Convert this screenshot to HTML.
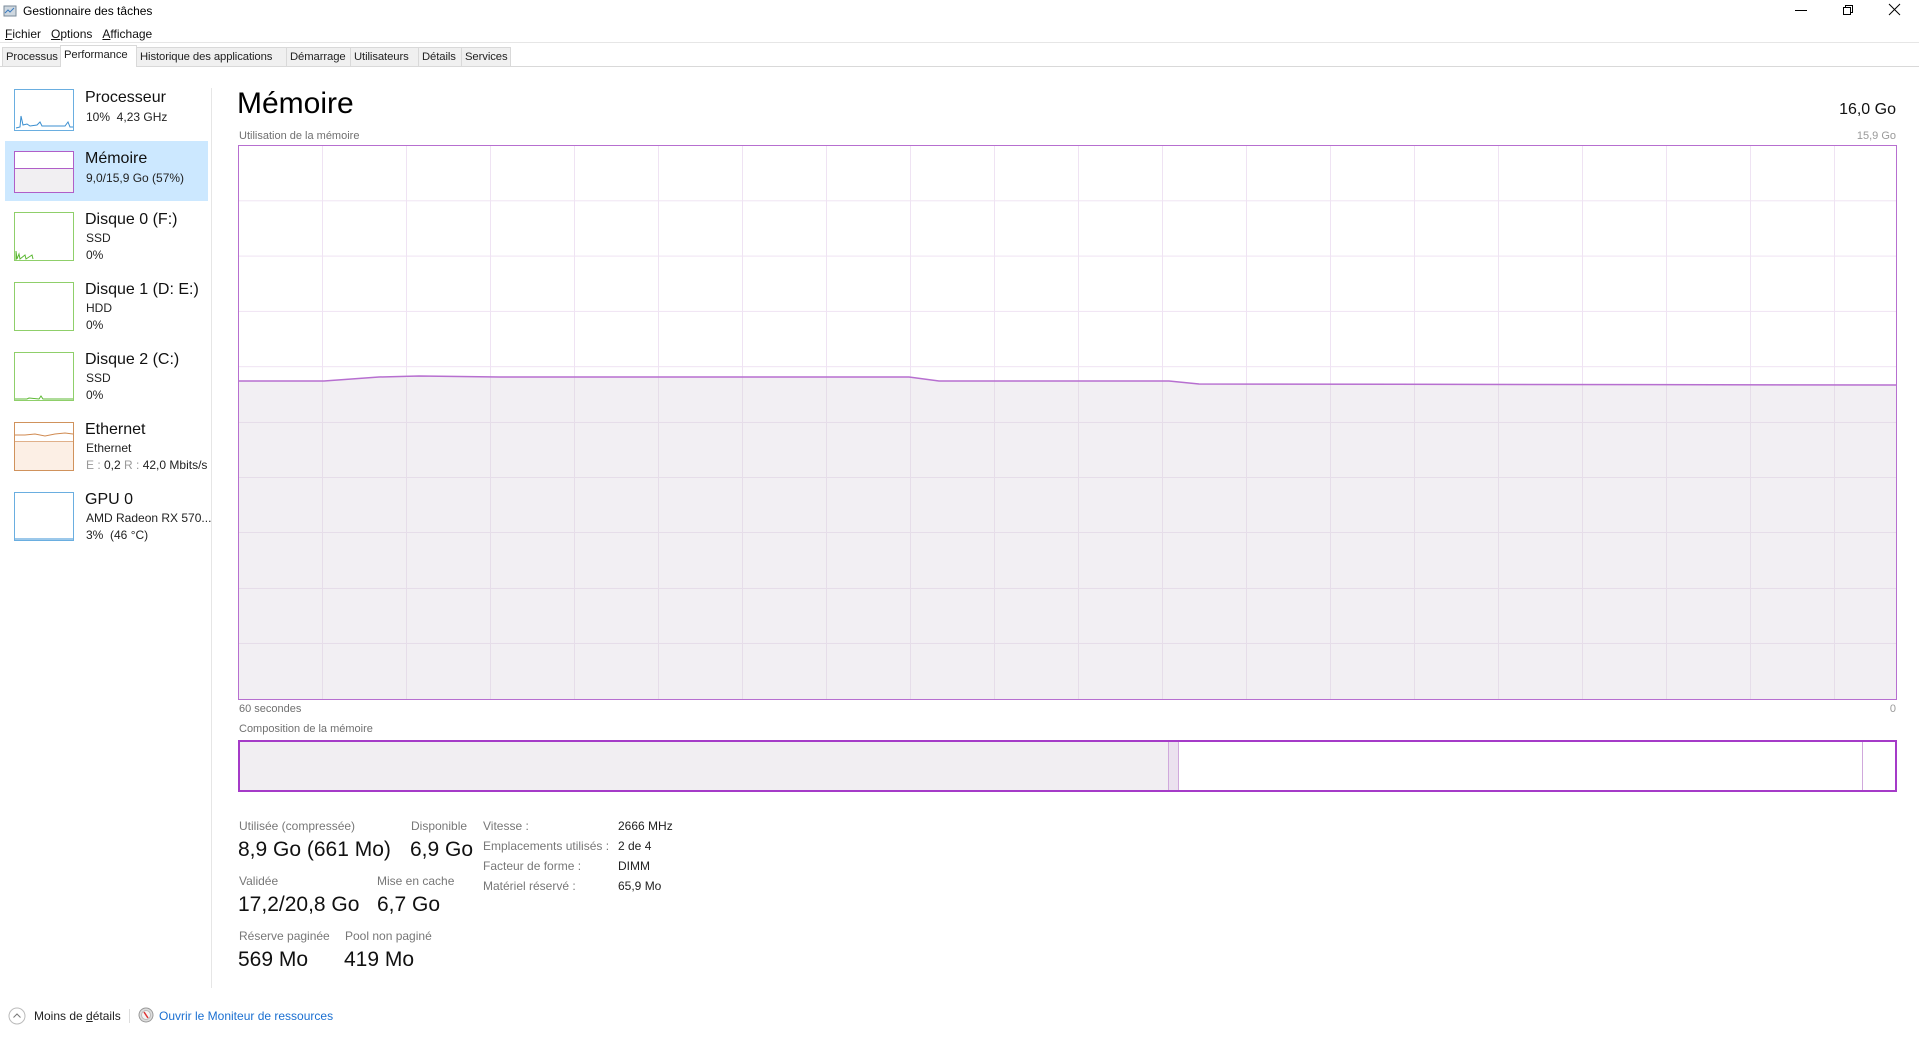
<!DOCTYPE html>
<html><head><meta charset="utf-8"><style>
*{margin:0;padding:0;box-sizing:border-box}
body{width:1919px;height:1040px;background:#fff;font-family:"Liberation Sans",sans-serif;color:#000;position:relative;overflow:hidden}
.a{position:absolute;white-space:nowrap}
.tab{position:absolute;top:47px;height:20px;background:#f0f0f0;border:1px solid #d9d9d9;font-size:11.3px;line-height:18px;padding-left:3px;color:#222;letter-spacing:-0.1px}
.th{position:absolute;left:14px;width:60px;height:49px;border:1px solid}
.t1{font-size:16px;color:#111}
.t2{font-size:12px;color:#222}
.g{color:#707070;font-size:11px}
.lab{font-size:12px;color:#777}
.val{font-size:21px;color:#111}
</style></head><body>
<svg class="a" style="left:3px;top:5px" width="14" height="12"><rect x="1" y="1" width="12" height="10" fill="#cfd8e0" stroke="#7a8a99"/><path d="M2 8 L5 5 L7 7 L11 3" stroke="#3b7bbf" fill="none"/></svg>
<div class="a" style="left:23px;top:4px;font-size:12px">Gestionnaire des tâches</div>
<div class="a" style="left:1795px;top:10px;width:12px;height:1px;background:#000"></div>
<svg class="a" style="left:1842px;top:4px" width="12" height="12"><rect x="1.5" y="3.5" width="7" height="7" fill="none" stroke="#000"/><path d="M3.5 3.5V1.5H10.5V8.5H8.5" fill="none" stroke="#000"/></svg>
<svg class="a" style="left:1888px;top:3px" width="13" height="13"><path d="M1 1L12 12M12 1L1 12" stroke="#000"/></svg>
<div class="a" style="left:5px;top:27px;font-size:12px;color:#111"><u>F</u>ichier&nbsp;&nbsp;&nbsp;<u>O</u>ptions&nbsp;&nbsp;&nbsp;<u>A</u>ffichage</div>
<div class="a" style="left:0;top:42px;width:1919px;height:1px;background:#e6e6e6"></div>
<div class="a" style="left:0;top:66px;width:1919px;height:1px;background:#d9d9d9"></div>
<div class="tab" style="left:2px;width:59px">Processus</div>
<div class="tab" style="left:60px;top:45px;height:22px;width:77px;background:#fff;border-bottom:none">Performance</div>
<div class="tab" style="left:136px;width:151px">Historique des applications</div>
<div class="tab" style="left:286px;width:65px">Démarrage</div>
<div class="tab" style="left:350px;width:69px">Utilisateurs</div>
<div class="tab" style="left:418px;width:44px">Détails</div>
<div class="tab" style="left:461px;width:50px">Services</div>
<div class="a" style="left:211px;top:88px;width:1px;height:900px;background:#e6e6e6"></div>
<div class="a" style="left:5px;top:141px;width:203px;height:60px;background:#cce8ff"></div>

<div class="th" style="top:89px;height:42px;border-color:#6aaee0;background:#fff"><svg width="58" height="40" style="display:block"><path d="M1 38 L5 37 L6 26 L8 35 L12 34 L15 36 L22 35 L25 32 L27 36 L40 36 L50 36 L53 32 L55 37 L58 37" stroke="#3b8fd0" fill="none"/></svg></div>
<div class="a t1" style="left:85px;top:89px">Processeur</div>
<div class="a t2" style="left:86px;top:110px">10%&nbsp; 4,23 GHz</div>

<div class="th" style="top:151px;height:42px;border-color:#b05ec8;background:#f1eff2"><div style="position:absolute;left:0;right:0;top:0;height:17px;background:#fff;border-bottom:1px solid #b05ec8"></div></div>
<div class="a t1" style="left:85px;top:150px">Mémoire</div>
<div class="a t2" style="left:86px;top:171px">9,0/15,9 Go (57%)</div>

<div class="th" style="top:212px;border-color:#8fcf6a"><svg width="58" height="47" style="display:block"><path d="M1 47 L1 38 L2 46 L4 41 L5 46 L10 42 L11 46 L17 42 L18 46" stroke="#5cb833" fill="none"/></svg></div>
<div class="a t1" style="left:85px;top:211px">Disque 0 (F:)</div>
<div class="a t2" style="left:86px;top:231px">SSD</div>
<div class="a t2" style="left:86px;top:248px">0%</div>

<div class="th" style="top:282px;border-color:#8fcf6a"></div>
<div class="a t1" style="left:85px;top:281px">Disque 1 (D: E:)</div>
<div class="a t2" style="left:86px;top:301px">HDD</div>
<div class="a t2" style="left:86px;top:318px">0%</div>

<div class="th" style="top:352px;border-color:#8fcf6a"><svg width="58" height="47" style="display:block"><path d="M0 46 L12 46 L14 45 L24 46 L26 43 L28 46 L58 46" stroke="#5cb833" fill="none"/></svg></div>
<div class="a t1" style="left:85px;top:351px">Disque 2 (C:)</div>
<div class="a t2" style="left:86px;top:371px">SSD</div>
<div class="a t2" style="left:86px;top:388px">0%</div>

<div class="th" style="top:422px;border-color:#d0925c;background:#fcefe5"><div style="position:absolute;left:0;right:0;top:0;height:19px;background:#fff;border-bottom:1px solid #e0b08a"></div><svg width="58" height="20" style="position:absolute;top:0;left:0"><path d="M0 12 L10 12 L20 11 L30 13 L40 11 L50 10 L58 11" stroke="#d08a50" fill="none"/></svg></div>
<div class="a t1" style="left:85px;top:421px">Ethernet</div>
<div class="a t2" style="left:86px;top:441px">Ethernet</div>
<div class="a t2" style="left:86px;top:458px"><span style="color:#999">E :</span> 0,2 <span style="color:#999">R :</span> 42,0 Mbits/s</div>

<div class="th" style="top:492px;border-color:#6aaee0"><div style="position:absolute;left:0;right:0;bottom:0;height:2px;background:#9cc8ea"></div></div>
<div class="a t1" style="left:85px;top:491px">GPU 0</div>
<div class="a t2" style="left:86px;top:511px">AMD Radeon RX 570...</div>
<div class="a t2" style="left:86px;top:528px">3%&nbsp; (46 °C)</div>

<div class="a" style="left:237px;top:87px;font-size:30px;color:#000">Mémoire</div>
<div class="a" style="right:23px;top:101px;font-size:16px;color:#111">16,0 Go</div>
<div class="a g" style="left:239px;top:130px">Utilisation de la mémoire</div>
<div class="a g" style="right:23px;top:130px;color:#999">15,9 Go</div>

<div class="a" style="left:238px;top:145px;width:1659px;height:555px;border:1px solid #b76fd0;background-color:#fff;
background-image:linear-gradient(to right,#efe3f3 1px,transparent 1px),linear-gradient(to bottom,#efe3f3 1px,transparent 1px);
background-size:84px 55.3px;background-position:83px 0,0 -1px"></div>
<svg class="a" style="left:239px;top:146px" width="1657" height="553">
<path d="M0 235 L85 235 L140 231 L180 230 L260 231 L420 231 L670 231 L700 235 L930 235 L960 238 L1657 239 L1657 553 L0 553Z" fill="#f1eef2" opacity="0.95"/>
<g stroke="#e6dde9" stroke-width="1"><path d="M83.5 235V553M167.5 232V553M251.5 231V553M335.5 231V553M419.5 231V553M503.5 231V553M587.5 231V553M671.5 231V553M755.5 235V553M839.5 235V553M923.5 235V553M1007.5 238V553M1091.5 238V553M1175.5 238V553M1259.5 238V553M1343.5 238V553M1427.5 238V553M1511.5 239V553M1595.5 239V553"/>
<path d="M0 276.5H1657M0 331.5H1657M0 386.5H1657M0 442.5H1657M0 497.5H1657"/></g>
<path d="M0 235 L85 235 L140 231 L180 230 L260 231 L420 231 L670 231 L700 235 L930 235 L960 238 L1657 239" stroke="#b76fd0" stroke-width="1.5" fill="none"/>
</svg>
<div class="a g" style="left:239px;top:703px">60 secondes</div>
<div class="a g" style="right:23px;top:703px;color:#999">0</div>
<div class="a g" style="left:239px;top:723px">Composition de la mémoire</div>
<div class="a" style="left:238px;top:740px;width:1659px;height:52px;border:2px solid #a53bc8;background:#fff"></div>
<div class="a" style="left:240px;top:742px;width:928px;height:48px;background:#f1eef2"></div>
<div class="a" style="left:1168px;top:742px;width:11px;height:48px;background:#ebe1ef;border-left:1px solid #d0a8dc;border-right:1px solid #d0a8dc"></div>
<div class="a" style="left:1862px;top:742px;width:1px;height:48px;background:#d0a8dc"></div>

<div class="a lab" style="left:239px;top:819px">Utilisée (compressée)</div>
<div class="a val" style="left:238px;top:838px">8,9 Go (661 Mo)</div>
<div class="a lab" style="left:411px;top:819px">Disponible</div>
<div class="a val" style="left:410px;top:838px">6,9 Go</div>
<div class="a lab" style="left:239px;top:874px">Validée</div>
<div class="a val" style="left:238px;top:893px">17,2/20,8 Go</div>
<div class="a lab" style="left:377px;top:874px">Mise en cache</div>
<div class="a val" style="left:377px;top:893px">6,7 Go</div>
<div class="a lab" style="left:239px;top:929px">Réserve paginée</div>
<div class="a val" style="left:238px;top:948px">569 Mo</div>
<div class="a lab" style="left:345px;top:929px">Pool non paginé</div>
<div class="a val" style="left:344px;top:948px">419 Mo</div>

<div class="a lab" style="left:483px;top:816px;line-height:20px">Vitesse :<br>Emplacements utilisés :<br>Facteur de forme :<br>Matériel réservé :</div>
<div class="a" style="left:618px;top:816px;line-height:20px;font-size:12px;color:#222">2666 MHz<br>2 de 4<br>DIMM<br>65,9 Mo</div>

<svg class="a" style="left:8px;top:1007px" width="18" height="18"><circle cx="9" cy="9" r="8" fill="none" stroke="#bbb"/><path d="M5.5 10.5L9 7L12.5 10.5" stroke="#777" fill="none"/></svg>
<div class="a" style="left:34px;top:1009px;font-size:12px;color:#222">Moins de <u>d</u>étails</div>
<div class="a" style="left:129px;top:1009px;width:1px;height:14px;background:#ddd"></div>
<svg class="a" style="left:138px;top:1007px" width="16" height="16"><circle cx="8" cy="8" r="7" fill="#ddd" stroke="#999"/><circle cx="8" cy="8" r="4.5" fill="#f4f4f4" stroke="#bbb"/><path d="M6 5L10 11" stroke="#d33" stroke-width="1.5"/></svg>
<div class="a" style="left:159px;top:1009px;font-size:12px;color:#1a6fd1">Ouvrir le Moniteur de ressources</div>
</body></html>
